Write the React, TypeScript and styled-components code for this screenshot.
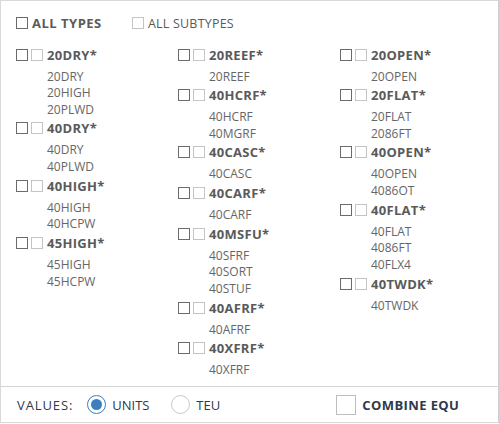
import React from "react";
import styled, { createGlobalStyle } from "styled-components";

const Global = createGlobalStyle`
  html, body { margin: 0; padding: 0; background: #fff; }
  body { font-family: "Open Sans", "Liberation Sans", sans-serif; }
`;

const Panel = styled.div`
  width: 499px;
  height: 423px;
  box-sizing: border-box;
  border: 1px solid #d9d9d9;
  border-right-color: #cfcfcf;
  box-shadow: 0 1px 2px rgba(0,0,0,0.12);
  display: flex;
  flex-direction: column;
  color: #5f5f5f;
  font-size: 12px;
`;

const Body = styled.div`
  flex: 1;
  padding: 15px 0 0 15px;
  display: flex;
  flex-direction: column;
`;

const TopRow = styled.div`
  display: flex;
  align-items: center;
  height: 14px;
  margin-bottom: 14.5px;
`;

const TopItem = styled.label<{ $w?: number }>`
  display: flex;
  align-items: center;
  gap: 4px;
  width: ${(p) => p.$w ?? 116}px;
`;

const Box = styled.span<{ $light?: boolean }>`
  display: inline-block;
  box-sizing: border-box;
  width: 12px;
  height: 12px;
  border: 1px solid ${(p) => (p.$light ? "#c4c4c4" : "#6b6b6b")};
  background: #fff;
  flex: none;
`;

const TopText = styled.span<{ $bold?: boolean }>`
  font-weight: ${(p) => (p.$bold ? 700 : 400)};
  font-size: ${(p) => (p.$bold ? 13 : 12.5)}px;
  letter-spacing: ${(p) => (p.$bold ? 0.5 : 0.2)}px;
  color: #5a5a5a;
`;

const Columns = styled.div`
  display: grid;
  grid-template-columns: 162px 162px 162px;
`;

const Column = styled.div`
  display: flex;
  flex-direction: column;
`;

const Group = styled.div`
  display: flex;
  flex-direction: column;
`;

const Header = styled.div`
  display: flex;
  align-items: center;
  height: 20px;
  margin-bottom: 4px;
  gap: 3px;
`;

const HeaderBoxes = styled.div`
  display: flex;
  gap: 3px;
  margin-right: 1px;
`;

const HeaderText = styled.span`
  font-weight: 700;
  font-size: 13px;
  letter-spacing: 0.3px;
  color: #5a5a5a;
`;

const Sub = styled.div`
  padding-left: 31px;
  height: 16.67px;
  line-height: 16.67px;
  font-size: 12px;
  color: #666;
`;

const Footer = styled.div`
  height: 35px;
  border-top: 1px solid #d4d4d4;
  display: flex;
  align-items: center;
  padding-left: 16px;
  color: #2e3a4c;
  font-size: 13px;
`;

const Label = styled.span`
  letter-spacing: 0.9px;
  margin-right: 14px;
`;

const Radio = styled.span<{ $on?: boolean }>`
  width: 19px;
  height: 19px;
  box-sizing: border-box;
  border-radius: 50%;
  border: 1px solid ${(p) => (p.$on ? "#3a7fc0" : "#c9c9c9")};
  display: flex;
  align-items: center;
  justify-content: center;
  margin-right: 6px;
  &::after {
    content: "";
    display: ${(p) => (p.$on ? "block" : "none")};
    width: 11px;
    height: 11px;
    border-radius: 50%;
    background: #3a7fc0;
  }
`;

const RadioText = styled.span<{ $w: number }>`
  width: ${(p) => p.$w}px;
`;

const BigBox = styled.span`
  width: 20px;
  height: 20px;
  box-sizing: border-box;
  border: 1px solid #bdbdbd;
  margin-right: 6px;
`;

const Bold = styled.span`
  font-weight: 700;
  letter-spacing: 0.4px;
`;

type G = { h: string; s: string[] };

const cols: G[][] = [
  [
    { h: "20DRY*", s: ["20DRY", "20HIGH", "20PLWD"] },
    { h: "40DRY*", s: ["40DRY", "40PLWD"] },
    { h: "40HIGH*", s: ["40HIGH", "40HCPW"] },
    { h: "45HIGH*", s: ["45HIGH", "45HCPW"] },
  ],
  [
    { h: "20REEF*", s: ["20REEF"] },
    { h: "40HCRF*", s: ["40HCRF", "40MGRF"] },
    { h: "40CASC*", s: ["40CASC"] },
    { h: "40CARF*", s: ["40CARF"] },
    { h: "40MSFU*", s: ["40SFRF", "40SORT", "40STUF"] },
    { h: "40AFRF*", s: ["40AFRF"] },
    { h: "40XFRF*", s: ["40XFRF"] },
  ],
  [
    { h: "20OPEN*", s: ["20OPEN"] },
    { h: "20FLAT*", s: ["20FLAT", "2086FT"] },
    { h: "40OPEN*", s: ["40OPEN", "4086OT"] },
    { h: "40FLAT*", s: ["40FLAT", "4086FT", "40FLX4"] },
    { h: "40TWDK*", s: ["40TWDK"] },
  ],
];

export default function App() {
  return (
    <>
      <Global />
      <Panel>
        <Body>
          <TopRow>
            <TopItem $w={116}>
              <Box />
              <TopText $bold>ALL TYPES</TopText>
            </TopItem>
            <TopItem $w={200}>
              <Box $light />
              <TopText>ALL SUBTYPES</TopText>
            </TopItem>
          </TopRow>
          <Columns>
            {cols.map((c, i) => (
              <Column key={i}>
                {c.map((g) => (
                  <Group key={g.h}>
                    <Header>
                      <HeaderBoxes>
                        <Box />
                        <Box $light />
                      </HeaderBoxes>
                      <HeaderText>{g.h}</HeaderText>
                    </Header>
                    {g.s.map((s) => (
                      <Sub key={s}>{s}</Sub>
                    ))}
                  </Group>
                ))}
              </Column>
            ))}
          </Columns>
        </Body>
        <Footer>
          <Label>VALUES:</Label>
          <Radio $on />
          <RadioText $w={59}>UNITS</RadioText>
          <Radio />
          <RadioText $w={140}>TEU</RadioText>
          <BigBox />
          <Bold>COMBINE EQU</Bold>
        </Footer>
      </Panel>
    </>
  );
}
